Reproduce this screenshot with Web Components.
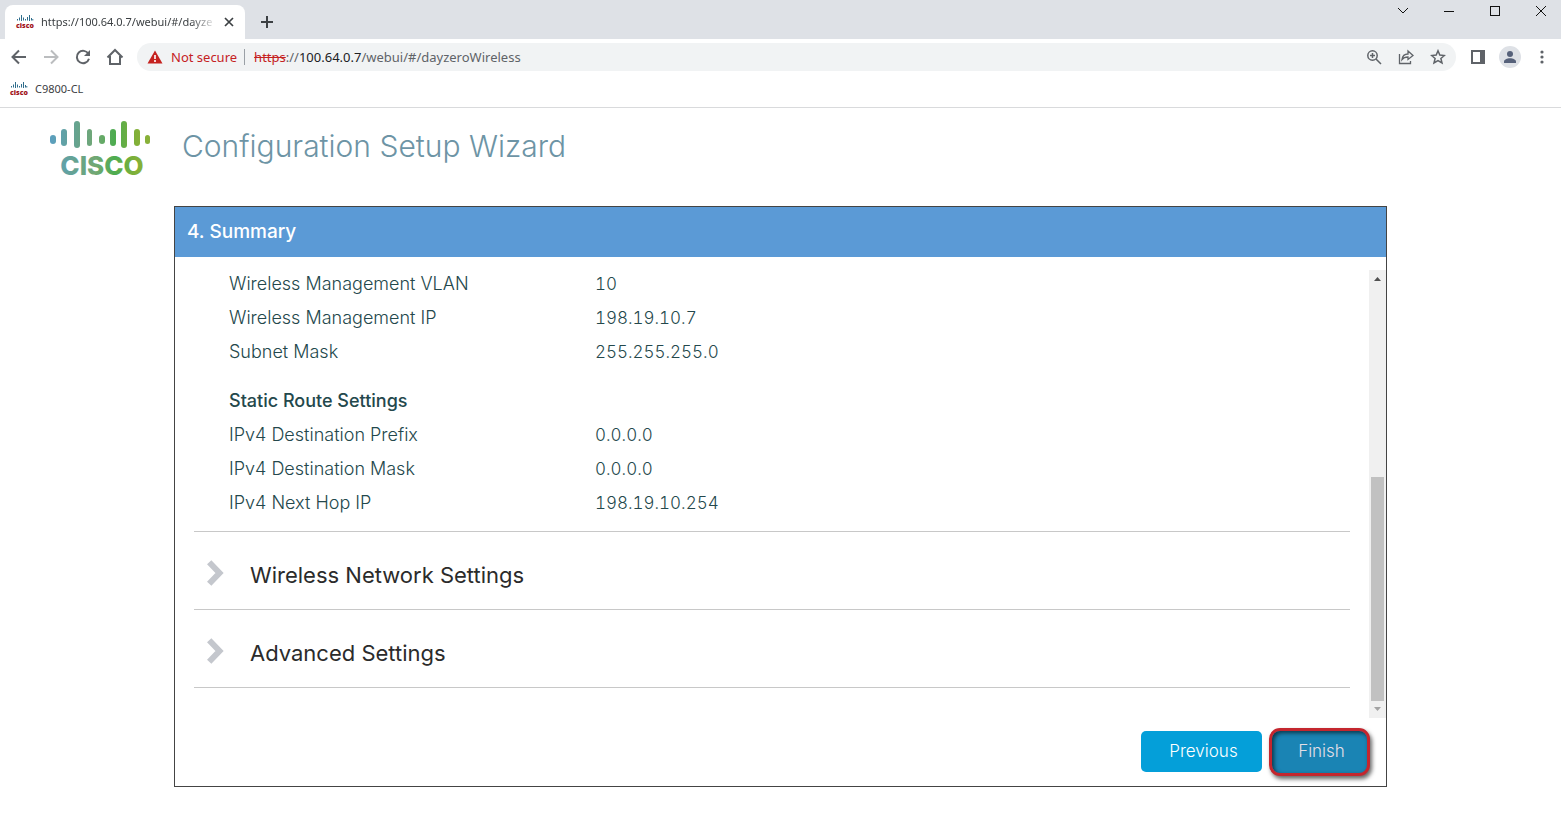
<!DOCTYPE html>
<html lang="en">
<head>
<meta charset="utf-8">
<title>Configuration Setup Wizard</title>
<style>
html,body{margin:0;min-height:100%;background:#fff}
body{font-family:Inter,"Liberation Sans",sans-serif}
</style>
</head>
<body>
<browser-chrome></browser-chrome>
<wizard-header>Configuration Setup Wizard</wizard-header>
<wizard-panel>
  <span slot="title">4. Summary</span>
  <settings-table rows="Wireless Management VLAN|10;Wireless Management IP|198.19.10.7;Subnet Mask|255.255.255.0"></settings-table>
  <settings-table caption="Static Route Settings" rows="IPv4 Destination Prefix|0.0.0.0;IPv4 Destination Mask|0.0.0.0;IPv4 Next Hop IP|198.19.10.254"></settings-table>
  <settings-section>Wireless Network Settings</settings-section>
  <settings-section>Advanced Settings</settings-section>
  <wizard-button slot="actions">Previous</wizard-button>
  <wizard-button slot="actions" highlighted>Finish</wizard-button>
</wizard-panel>

<script>
const define = (name, html, init) => customElements.define(name, class extends HTMLElement {
  constructor() {
    super();
    const t = document.createElement('template');
    t.innerHTML = html;
    this.attachShadow({ mode: 'open' }).append(t.content.cloneNode(true));
  }
  connectedCallback() { if (init) init(this, this.shadowRoot); }
});

define('cisco-mark', `
<style>
:host{display:block;width:16px;height:16px;flex:none}
svg{display:block;width:100%;height:100%;overflow:visible}
text{font:800 7px "Open Sans",sans-serif;fill:#a1151c}
</style>
<svg viewBox="0 0 16 16" aria-hidden="true">
<g stroke="#2f6d8c" stroke-width="1" fill="none"><path d="M.5 5v1.500M2.500 3.500v3M4.500 1v6M6.500 3.500v3M8.500 5v1.500M10.500 3v3.500M12.500 1v6M14.500 4v2.500M15.800 5v1.500"/></g>
<text x="8" y="14" text-anchor="middle">cisco</text></svg>`);

define('cisco-logo', `
<style>
:host{display:block;width:102px;height:58px;flex:none}
svg{display:block;width:100%;height:100%;overflow:visible}
text{font:800 26px Inter,sans-serif;fill:url(#g)}
</style>
<svg viewBox="0 0 102 58" role="img" aria-label="Cisco">
<defs><linearGradient id="g" gradientUnits="userSpaceOnUse" x1="0" x2="102" y1="0" y2="0">
<stop offset="0" stop-color="#5b9fc0"/><stop offset=".3" stop-color="#68a487"/><stop offset=".45" stop-color="#72a873"/><stop offset=".63" stop-color="#4dac50"/><stop offset=".85" stop-color="#83b037"/><stop offset="1" stop-color="#8ab13a"/></linearGradient></defs>
<g fill="url(#g)">
<rect x="0" y="15" width="6" height="9" rx="3"/><rect x="11" y="9" width="6" height="17" rx="3"/><rect x="24" y="1" width="6" height="27" rx="3"/><rect x="37" y="9" width="5" height="17" rx="2.500"/><rect x="49" y="15" width="6" height="9" rx="3"/><rect x="60" y="9" width="6" height="17" rx="3"/><rect x="71" y="1" width="6" height="27" rx="3"/><rect x="84" y="9" width="6" height="17" rx="3"/><rect x="95" y="15" width="5" height="9" rx="2.500"/>
</g>
<text x="52" y="55" text-anchor="middle">CISCO</text></svg>`);

define('browser-chrome', `
<style>
:host{display:block;font-family:"Noto Sans","Liberation Sans",sans-serif;color:#3c4043;border-bottom:1px solid #d9dadc}
button{border:0;background:none;padding:0;margin:0;color:#5f6368;display:flex;align-items:center;justify-content:center;flex:none}
svg{display:block;fill:none;stroke:currentColor}
.strip{display:flex;height:39px;background:#dee1e6}
.tab{display:flex;align-items:center;box-sizing:border-box;width:240px;margin:5px 0 0 5px;padding:0 10px 0 12px;background:#fff;border-radius:8px 8px 0 0}
.tab span{flex:1;margin:0 6px 0 8px;font-size:11px;line-height:16px;white-space:nowrap;-webkit-mask-image:linear-gradient(90deg,#000 85%,transparent)}
.tab button{width:12px;height:12px;color:#3c4043}
.new{width:28px;height:28px;margin:8px 0 0 8px;color:#3c4043}
.win{display:flex;margin-left:auto;height:22px}
.win button{width:46px;padding-left:6px;color:#111}
.bar{display:flex;align-items:center;height:36px;padding:0 3px}
.nav{width:32px;height:32px}
.nav.off{color:#bbbdbf}
.omni{display:flex;align-items:center;flex:1;height:28px;margin:0 6px;border-radius:14px;background:#f1f3f4;padding:0 2px 0 10px;min-width:0;font-size:13px}
.note{color:#c5221f;margin:0 7px 0 8px;white-space:nowrap}
.sep{width:1px;height:16px;background:#9aa0a6;margin-right:9px}
.url{flex:1;color:#5f6368;text-decoration:none;white-space:nowrap}
.url s{color:#c5221f}.url b{font-weight:400;color:#202124}
.avatar{width:32px}
.marks{display:flex;align-items:center;height:32px;padding:0 0 0 11px;font-size:11px}
.marks a{display:flex;gap:8px;align-items:center;color:inherit;text-decoration:none;line-height:16px;padding-bottom:5px}
</style>
<div class="strip">
 <div class="tab"><cisco-mark></cisco-mark><span>https://100.64.0.7/webui/#/dayze</span>
 <button aria-label="Close tab"><svg width="10" height="10" stroke-width="1.700"><path d="M1 1l8 8M9 1L1 9"/></svg></button></div>
 <button class="new" aria-label="New tab"><svg width="12" height="12" stroke-width="2"><path d="M6 0v12M0 6h12"/></svg></button>
 <div class="win">
 <button aria-label="Search tabs"><svg width="12" height="8"><path d="M1 1l5 5 5-5"/></svg></button>
 <button aria-label="Minimize"><svg width="10" height="2" shape-rendering="crispEdges"><path d="M0 1.500h10"/></svg></button>
 <button aria-label="Maximize"><svg width="10" height="10" shape-rendering="crispEdges"><path d="M.5.5h9v9h-9z"/></svg></button>
 <button aria-label="Close"><svg width="10" height="10"><path d="M0 0l10 10M10 0L0 10"/></svg></button>
 </div>
</div>
<div class="bar">
 <button class="nav" aria-label="Back"><svg width="16" height="16" stroke-width="2"><path d="M15 8H2M8 1.500L1.500 8 8 14.500"/></svg></button>
 <button class="nav off" aria-label="Forward"><svg width="16" height="16" stroke-width="2"><path d="M1 8h13M8 1.500L14.500 8 8 14.500"/></svg></button>
 <button class="nav" aria-label="Reload"><svg width="16" height="16" stroke-width="2"><path d="M13.500 5A6.200 6.200 0 1 0 14 9.800"/><path d="M15 1v6H9z" fill="currentColor" stroke="none"/></svg></button>
 <button class="nav" aria-label="Home"><svg width="18" height="18" stroke-width="2"><path d="M1.500 9.500L9 2l7.500 7.500M4 8v8h10V8"/></svg></button>
 <div class="omni">
 <svg width="16" height="14" viewBox="0 0 16 14"><path d="M8 .5L15.500 13.500H.5z" fill="#c5221f" stroke="none"/><path d="M8 5v4M8 10v2" stroke="#fff" stroke-width="1.600"/></svg>
 <span class="note">Not secure</span><i class="sep"></i>
 <a class="url" href="#/dayzeroWireless"><s>https</s>://<b>100.64.0.7</b>/webui/#/dayzeroWireless</a>
 <button class="nav" aria-label="Zoom"><svg width="16" height="16" stroke-width="1.500"><circle cx="6.500" cy="6.500" r="4.700"/><path d="M10 10l5 5M4 6.500h5M6.500 4v5"/></svg></button>
 <button class="nav" aria-label="Share"><svg width="16" height="16" stroke-width="1.300"><path d="M1.500 5v9.500h11V12"/><path d="M4 10.500C4.500 6.500 7 5 10 5V2l5 4.500-5 4V8C7.500 8 5.500 8.500 4 10.500z"/></svg></button>
 <button class="nav" aria-label="Bookmark"><svg width="16" height="16" stroke-width="1.500"><path d="M8 1.800l1.800 4.300 4.600.4-3.500 3 1.100 4.500L8 11.600 4 14l1.100-4.500-3.500-3 4.600-.4z"/></svg></button>
 </div>
 <button class="nav" aria-label="Side panel"><svg width="14" height="14" shape-rendering="crispEdges"><path d="M1 1h12v12H1z" stroke-width="2"/><path d="M9 0h5v14H9z" fill="currentColor" stroke="none"/></svg></button>
 <button class="avatar" aria-label="Profile"><svg width="22" height="22"><circle cx="11" cy="11" r="11" fill="#dee1e6" stroke="none"/><g fill="#56617a" stroke="none"><circle cx="11" cy="8" r="3"/><path d="M5 17v-1.500c0-2 3-3.300 6-3.300s6 1.300 6 3.300V17z"/></g></svg></button>
 <button class="nav" aria-label="Menu"><svg width="4" height="14"><g fill="currentColor" stroke="none"><circle cx="2" cy="2" r="1.600"/><circle cx="2" cy="7" r="1.600"/><circle cx="2" cy="12" r="1.600"/></g></svg></button>
</div>
<nav class="marks"><a href="#/"><cisco-mark></cisco-mark>C9800-CL</a></nav>`);

define('wizard-header', `
<style>
:host{display:flex;align-items:flex-start;gap:30px;padding:12px 50px 28px;color:#6d94a5}
h1{margin:6px 0 0;font-size:30px;line-height:40px;font-weight:300}
</style>
<cisco-logo></cisco-logo><h1><slot></slot></h1>`);

define('wizard-panel', `
<style>
:host{display:block;margin:0 174px;border:1px solid #444}
h2{margin:0;height:50px;line-height:50px;padding-left:12px;background:#5b9ad6;color:#fff;font-size:19px;font-weight:500}
.body{display:flex;margin-top:13px;height:448px}
.content{flex:1;min-width:0;padding:0 19px}
.scroll{display:flex;flex-direction:column;align-items:center;width:17px;background:#f0f0f0}
.scroll svg{display:block;height:17px;width:17px;fill:#505050}
.scroll svg:last-child{fill:#a3a3a3}
.gap{flex:190}.thumb{flex:224;width:13px;background:#c1c1c1}
footer{display:flex;justify-content:flex-end;align-items:center;gap:7px;height:68px;padding:0 16px 1px;box-sizing:border-box}
</style>
<h2><slot name="title"></slot></h2>
<div class="body"><div class="content"><slot></slot></div>
<div class="scroll" aria-hidden="true"><svg viewBox="0 0 17 17"><path d="M5 11l3.500-4L12 11z"/></svg><i class="gap"></i><i class="thumb"></i><svg viewBox="0 0 17 17"><path d="M5 6l3.500 4L12 6z"/></svg></div></div>
<footer><slot name="actions"></slot></footer>`);

define('settings-table', `
<style>
:host{display:block;color:#24484c;padding-left:35px}
:host([caption]){padding-top:15px;padding-bottom:8px}
table{width:100%;border-collapse:collapse;table-layout:fixed;font-size:18px;line-height:26px}
caption{text-align:left;font-weight:500;padding:1px 0 7px}
caption:empty{display:none}
th,td{padding:1px 0 7px;text-align:left;font-weight:300}
td{font-size:17px;font-variant-numeric:tabular-nums}
th{width:366px}
</style>
<table><caption></caption><tbody></tbody></table>`, (host, root) => {
  root.querySelector('caption').textContent = host.getAttribute('caption') || '';
  const body = root.querySelector('tbody');
  body.replaceChildren();
  for (const row of host.getAttribute('rows').split(';')) {
    const [label, value] = row.split('|');
    const tr = body.insertRow();
    const th = document.createElement('th');
    th.scope = 'row';
    th.textContent = label;
    tr.append(th);
    tr.insertCell().textContent = value;
  }
});

define('settings-section', `
<style>
:host{display:block;border-top:1px solid #c8c8c8;color:#2b2b2b}
:host(:last-of-type){border-bottom:1px solid #c8c8c8}
h3{margin:0;font-weight:400}
button{display:flex;align-items:center;gap:26px;width:100%;height:77px;padding:8px 0 0 13px;border:0;background:none;color:inherit;font:400 22px/30px Inter,"Liberation Sans",sans-serif;text-align:left}
svg{display:block;flex:none;margin-bottom:3px}
</style>
<h3><button aria-expanded="false"><svg width="17" height="26" viewBox="0 0 17 26" fill="none" stroke="#c4c7cd" stroke-width="6"><path d="M2.200 2.200L12.500 13 2.200 23.800"/></svg><slot></slot></button></h3>`);

define('wizard-button', `
<style>
:host{display:block}
button{display:block;box-sizing:border-box;width:121px;height:41px;padding:0 0 2px 4px;border:0;border-radius:5px;background:#049fd9;color:#fff;font:300 17px/24px Inter,"Liberation Sans",sans-serif}
:host([highlighted]) button{width:101px;height:48px;border:3px solid #c4262e;border-radius:11px;background:#1a84b4;color:#e3dfe6;box-shadow:2px 3px 4px #0009,inset 2px 2px 4px #0009}
</style>
<button type="button"><slot></slot></button>`);
</script>
</body>
</html>
